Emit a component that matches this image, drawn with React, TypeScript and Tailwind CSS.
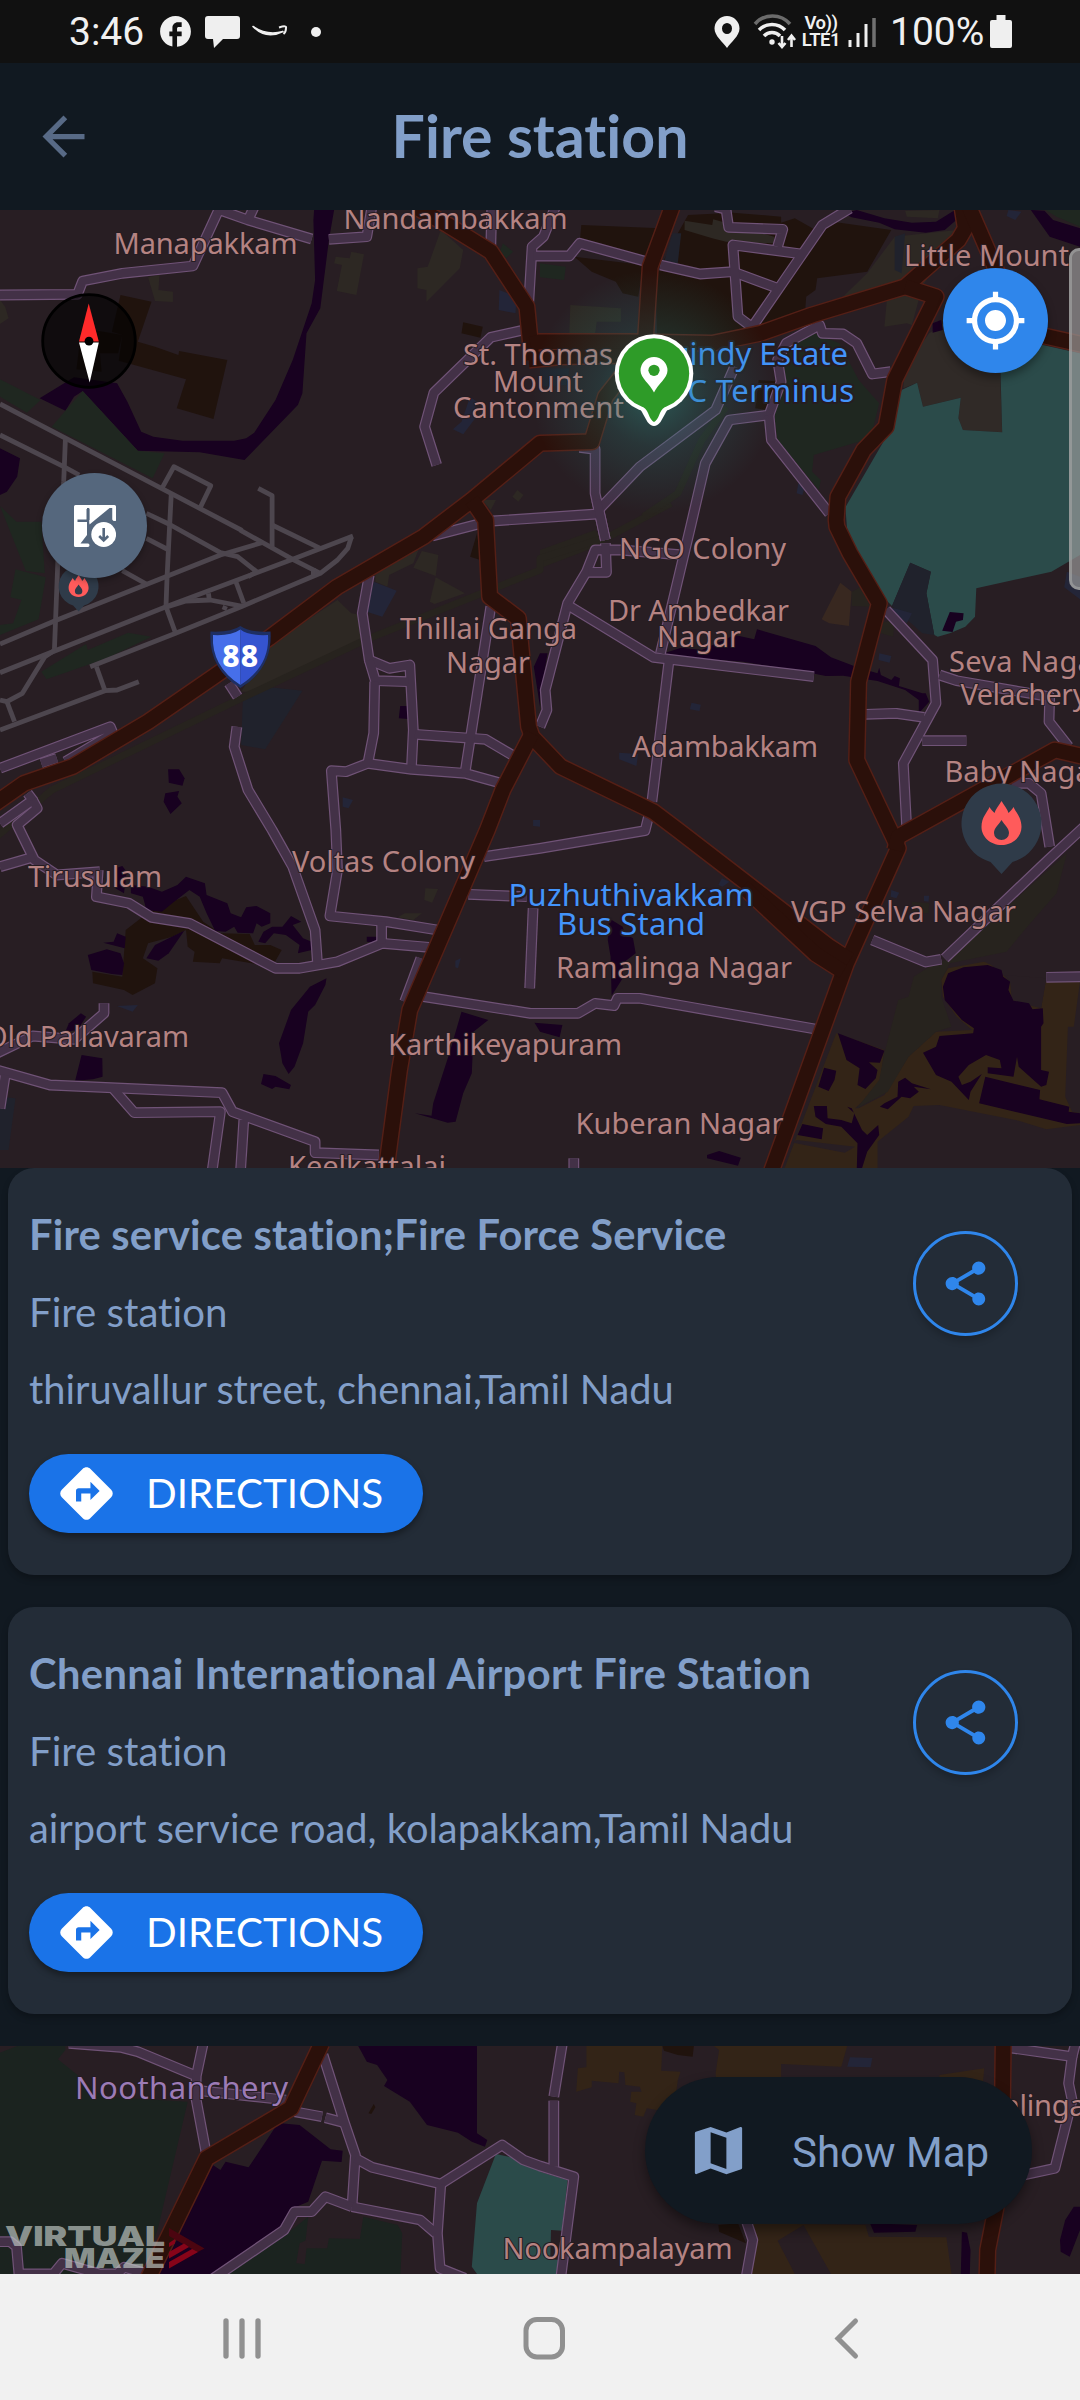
import type { ReactNode } from 'react';
import { MdArrowBack, MdMap, MdMyLocation, MdShare, MdDirections, MdFacebook } from 'react-icons/md';

/* ---------- Map geometry ---------- */

// Each map sheet has its own origin; a sheet is 1568 units wide for 540 px, and 3 units per px high.
const SHEETS: Record<string, [number, number]> = {
  A: [0, 200],
  B: [540, 200],
  C: [0, 500],
  D: [540, 500],
  E: [0, 830],
  F: [540, 830],
  G: [0, 2030],
  H: [540, 2030],
};

// "A 0 10 20 30 B 5 5" -> polyline points in page pixels
function pts(src: string): string {
  const out: string[] = [];
  let o = SHEETS.A;
  let u: number | null = null;
  for (const t of src.split(' ')) {
    if (SHEETS[t]) o = SHEETS[t];
    else if (u === null) u = Number(t);
    else {
      out.push((o[0] + (u * 540) / 1568).toFixed(1) + ',' + (o[1] + Number(t) / 3).toFixed(1));
      u = null;
    }
  }
  return out.join(' ');
}

const AREAS: [string, string[]][] = [
  ['#20130d', [
    'A 350 285 440 305 400 425 450 440 518 465 520 453 660 480 620 657 513 625 540 538 345 482 355 405 325 395',
    'A 270 390 355 405 343 460 290 460 295 515 222 508 235 400',
    'A 1345 367 1402 380 1395 413 1340 400',
    'B 120 75 350 85 325 180 300 175 115 135',
    'B 400 100 430 45 560 38 700 50 700 68 740 55 800 90 830 62 1020 90 950 215 805 235 800 270 773 290 770 330 620 385 540 430 340 410 335 230',
    'B 100 170 300 195 285 290 240 280 220 245 150 215',
    'B 635 540 700 545 660 630 625 625',
    'C 1385 100 1395 180 1365 170',
    'E 540 198 590 275 640 310 725 312 740 345 785 345 818 360 790 410 645 385 638 400 560 395 565 365 545 350 540 300 500 320 430 340 415 385 457 415 450 460 385 495 360 480 270 460 268 425 355 440 365 300 440 240',
    'G 1085 222 1090 232 1078 252 1070 250',
    'H 518 585 575 580 598 640 520 605',
    'H 355 48 447 48 443 80 400 75 360 62',
  ]],
  ['#2d2823', [
    'A 430 232 463 225 460 270 502 275 502 306 450 303',
    'A 975 170 1015 175 1020 155 1057 163 1035 285 978 273 993 195 970 190',
    'A 1280 90 1345 150 1335 205 1238 305 1238 270 1212 265 1212 205 1242 200',
    'A 0 300 15 320 25 355 0 372',
    'B 420 62 500 75 503 58 680 110 680 130 540 125 500 115 420 90',
    'B 88 315 235 325 235 365 165 365 160 400 85 400',
    'B 1030 110 1210 90 1110 260 1080 375 1065 370 1000 380 1010 270 870 300 950 220',
    'B 1060 32 1160 30 1155 55 1065 50',
    'C 980 300 1020 340 1050 345 1065 420 740 575 700 575 790 430',
    'C 1200 203 1225 153 1273 165 1265 228',
    'C 1265 232 1350 280 1262 312 1248 305',
    'C 1090 225 1130 190 1215 150 1200 190 1130 225 1125 260 1090 245',
    'E 1235 175 1272 177 1255 218 1232 210',
    'E 1175 250 1225 250 1200 270 1155 262',
    'A 1400 900 1440 900 1425 930',
    'A 1502 870 1520 885 1505 905 1488 890',
  ]],
  ['#302a27', [
    'B 1160 380 1210 330 1330 445 1335 500 1342 697 1228 690 1215 655 1222 593 1112 620 1095 548 1055 565 1060 500 1130 400',
  ]],
  ['#180120', [
    'A 912 30 970 30 955 120 930 325 890 400 878 580 865 615 710 780 580 757 400 752 240 573 215 590 190 632 115 595 215 532 340 550 370 605 410 695 445 710 530 722 680 722 715 715 738 698 800 600 850 480 905 310 915 240 910 60',
    'A 0 745 58 775 50 830 20 875 0 885',
    'B 880 40 920 30 1000 55 1080 68 1150 65 1205 30 1215 55 1175 90 1120 98 1030 88 985 68 905 52',
    'B 1425 30 1465 32 1490 60 1568 85 1568 140 1480 110',
    'B 1140 370 1165 360 1170 390 1140 398',
    'D 360 460 410 443 470 450 565 405 622 418 630 388 800 438 845 472 925 503 980 520 985 503 990 525 1020 540 1030 528 1045 535 1042 558 1110 580 1120 580 1130 605 1100 640 1100 600 1060 570 980 543 880 527 830 528 790 520 590 485 460 475',
    'D 0 460 22 460 5 560 0 565 C 1568 620 1550 500 1568 460',
    'C 488 808 520 808 536 835 530 857 490 848',
    'C 480 880 520 873 515 890 528 910 495 942 475 905',
    'C 1162 618 1185 618 1185 657 1158 655',
    'E 335 115 355 108 368 125 360 190 335 175',
    'E 380 165 430 170 470 185 515 165 540 140 595 160 600 195 660 220 670 250 700 262 715 232 745 228 785 250 785 280 760 290 745 280 735 310 690 308 680 290 655 305 625 303 600 250 580 200 550 180 500 220 470 245 425 240 415 200 380 190',
    'E 300 338 330 335 340 310 365 320 362 355',
    'E 255 375 310 358 350 370 360 400 355 435 325 432 265 420',
    'E 535 302 490 370 460 392 425 385 450 345',
    'E 750 335 765 305 790 290 820 290 845 258 875 275 850 285 880 325 905 335 905 360 865 370 870 345 830 315 795 310 770 340',
    'E 1065 320 1095 320 1095 338 1065 335',
    'E 948 445 945 465 915 525 895 545 880 640 855 710 838 732 820 700 810 640 845 540 900 470',
    'E 765 732 800 738 845 765 840 778 800 770 790 777 758 762',
    'E 190 605 200 580 235 550 250 560 225 600',
    'E 237 675 297 685 298 740 270 748 218 752',
    'E 1340 545 1418 570 1375 605 1370 730 1345 790 1323 875 1300 878 1205 850 1253 857 1258 820 1305 670',
    'E 1552 578 F 65 585 57 622 0 605',
    'F 200 265 240 290 245 310 270 325 278 370 240 400 240 445 208 497 205 380 197 330',
    'F 520 963 583 983 575 1007 485 985 485 975',
    'G 1040 48 1385 48 1385 310 1415 330 1408 350 1370 335 1330 308 1240 285 1190 215 1115 168 1125 150 1095 105 1065 95',
    'G 815 280 870 285 960 358 995 362 992 396 935 392 895 515 860 530 820 605 625 732 440 732 500 620 610 400 640 420 655 395 722 412 800 290',
    'H 958 580 1095 585 1090 605 970 608',
    'H 1225 605 1240 608 1250 660 1248 732 1222 732',
    'H 1550 530 1568 530 1568 600 1538 680 1512 665 1510 630 1525 570',
  ]],
  ['#1f2720', [
    'A 0 538 118 600 78 638 0 590',
    'A 240 573 400 752 478 760 443 835 150 680 190 632',
    'C 0 18 48 65 120 65 130 220 75 213',
    'C 45 208 133 232 112 358 0 405 0 375 38 370 62 300 30 292',
    'C 120 515 250 432 255 450 372 398 440 410 310 475 135 538',
    'B 795 400 870 430 925 540 985 610 960 715 795 765 790 815 815 840 810 870 690 720 680 640 700 560 690 500 710 440',
    'B 1468 30 1568 30 1568 80 1500 50',
    'A 1460 130 1490 155 1470 175 1450 160',
    'B 0 190 75 200 70 240 0 232',
  ]],
  ['#1b231f', [
    'G 0 68 50 48 190 48 190 60 168 88 225 135 300 200 545 215 460 590 415 732 0 732',
    'G 895 560 885 655 950 655 955 625 1045 627 1055 560 1155 585 1168 610 1163 732 650 732 840 605',
  ]],
  ['#281e23', ['G 890 630 870 640 860 700 885 702 890 655']],
  ['#2b4b4a', [
    'B 1335 445 1460 435 1568 460 D 1568 165 1485 215 1267 265 1263 350 1235 380 1190 400 1155 410 1145 405 1122 280 1135 215 1075 188 1022 318 1005 300 895 130 885 0 B 885 925 1000 720 1050 570 1095 548 1112 620 1222 593 1215 655 1228 690 1342 697',
    'G 1440 372 1500 385 1568 410 H 0 425 80 450 50 732 G 1385 732 1370 710 1385 520',
  ]],
  ['#281e23', ['H 32 600 65 602 60 690 30 688']],
  ['#20222c', [
    'D 1075 188 1135 215 1122 280 1145 405 1110 400 1022 318',
    'C 705 600 770 560 878 572 770 748 700 735',
    'E 0 800 45 805 25 960 0 960',
    'B 0 505 85 505 80 555 0 560',
    'B 385 100 410 100 400 190 360 185',
    'B 1030 110 1060 100 1050 220 1030 210',
  ]],
  ['#232538', [
    'C 1085 245 1152 272 1110 350 1065 335',
    'D 1005 318 1080 340 1065 370',
    'D 985 460 1020 468 1015 488 983 480',
    'D 440 608 467 614 463 633 435 628',
    'D 230 758 285 762 280 798 230 778',
    'C 995 892 1025 900 1012 925 995 920',
    'C 1548 960 1568 960 1568 980 1548 978',
    'E 1322 392 1338 385 1330 415 1322 412',
    'E 340 528 400 525 385 545',
    'A 1450 270 1500 290 1497 340 1448 330',
    'A 1340 665 1365 590 1385 605 1375 640 1380 655 1345 703 1315 688',
    'F 528 145 550 155 530 170 518 165',
    'F 1020 180 1043 188 1035 205 1018 200',
    'F 1115 197 1130 197 1128 215 1115 213',
    'H 900 82 965 84 960 112 892 110',
    'B 1360 30 1398 35 1380 60 1355 48',
    'B 750 850 770 855 762 885 745 880',
    'D 1530 215 1568 230 1568 298 1522 262',
  ]],
  ['#180120', ['D 1190 336 1230 340 1228 360 1208 365 1198 396 1168 392']],
  ['#382820', ['D 872 248 905 275 897 378 840 370 818 358']],
  ['#332417', [
    'F 860 610 1000 660 985 770 915 835 925 835 1000 795 1070 680 1150 605 1255 600 1210 560 1170 500 1165 450 1185 415 1290 395 1310 405 1350 440 1420 520 1455 535 1468 455 1568 455 1550 590 1533 590 1525 800 1545 845 1568 850 1568 885 1470 898 1390 872 1160 825 1085 828 1070 860 980 935 980 1015 710 1015',
    'H 135 48 355 48 352 122 408 125 400 150 390 230 340 240 310 235 300 260 275 255 280 220 262 215 265 185 295 185 290 170 248 165 245 127 230 125 228 160 150 152 150 172 105 185 110 115 135 112',
    'H 505 48 892 48 875 110 700 102 700 200 515 200 510 130 520 60',
    'H 1160 135 1290 115 1285 170 1160 170',
    'H 610 580 945 585 955 620 1180 622 1195 732 845 732 765 585 690 632 740 732 600 732',
  ]],
  ['#281e23', ['F 745 930 915 950 885 968 735 938', 'F 1350 435 1470 445 1455 535 1418 525 1370 510 1365 455']],
  ['#180120', [
    'F 1185 430 1230 412 1300 405 1340 420 1345 440 1365 455 1360 480 1375 512 1420 520 1430 538 1460 535 1462 580 1455 590 1455 720 1478 725 1470 765 1455 770 1390 710 1385 680 1375 740 1300 730 1300 712 1340 715 1335 690 1295 675 1245 705 1215 740 1225 765 1250 755 1283 732 1250 785 1245 810 1195 755 1150 735 1112 668 1150 650 1160 618 1258 610 1260 595 1225 570 1175 510 1170 470',
    'F 1293 740 1452 780 1450 808 1537 830 1535 845 1568 850 1568 880 1530 882 1275 820',
    'F 865 610 1000 662 987 698 955 697 980 720 975 745 945 777 922 765 928 715 890 690',
    'F 825 713 860 722 855 750 838 783 808 770',
    'F 762 882 822 895 818 928 748 915',
    'F 795 828 833 828 835 865 875 870 905 880 913 850 892 830 905 835 935 900 950 915 982 885 985 915 950 965 935 1015 920 1015 922 940 875 890 830 882 800 860',
    'F 1040 755 1060 743 1080 760 1135 778 1085 770 1100 785 1075 805 1050 800 1010 838 987 830 1000 820 1038 800',
  ]],
  ['#27231e', [
    'F 1530 70 1500 190 1415 290 1355 365 1190 400 1165 450 1165 500 1195 590 1150 605 1070 680 1010 785 920 835 985 750 1000 670 1040 510 1070 500 1085 440 1130 410 1190 385',
    'F 1080 215 1130 220 1128 250 1080 250',
    'D 985 370 1030 360 1025 410 990 400',
    'D 905 275 930 262 960 320 905 318',
    'D 0 150 160 90 190 130 0 205',
  ]],
];

const TAXIWAYS = [
  'A 0 612 700 990 C 700 92 850 178 930 220',
  'A 0 705 185 800 230 825',
  'A 190 718 185 845 C 168 180 158 450',
  'A 470 865 505 800 612 857 582 922',
  'A 497 885 492 990 C 485 235 482 320 510 400',
  'A 750 865 790 887 C 790 0 790 140',
  'C 425 40 490 72 640 158 690 170 745 215 720 230',
  'C 425 115 490 150',
  'C 790 75 930 145',
  'C 0 432 160 362 640 165 760 128',
  'C 0 518 482 320 850 178 1025 108',
  'C 0 690 305 572 340 570 403 545',
  'C 262 500 510 400 700 320 930 220 980 180 1010 145 1020 112',
  'C 160 450 130 470 65 580 20 605 0 600',
  'C 20 605 42 665',
  'C 280 500 305 572',
  'C 355 212 430 255',
  'C 685 245 708 310',
  'C 482 322 540 303 610 300 700 318',
  'C 605 280 608 300',
  'C 655 318 650 330',
  'C 910 205 910 230',
];

const MINOR = [
  'A 0 285 225 283 240 243 355 220 560 198 635 30 640 20',
  'A 625 25 720 60 905 117',
  'A 720 60 738 20',
  'A 955 118 1065 110 1080 20',
  'A 1428 20 1425 140',
  'A 1535 315 1545 140 B 10 110 45 20',
  'A 1550 168 B 85 168 115 130 310 185',
  'B 350 195 465 222 560 215 690 265',
  'B 510 20 540 28 548 82 705 88 690 140',
  'B 760 162 560 135 575 350 620 385',
  'B 900 25 820 75 750 180 610 390',
  'A 1520 390 1425 412 1260 578 1233 680 1268 795',
  'B 1018 515 965 522 920 430 880 402 820 400 812 375 715 430 690 480 700 545 665 645 550 660 480 790 435 990 D 350 460',
  'B 665 645 672 720 840 940',
  'B 565 500 510 630 290 800 165 935',
  'B 115 742 160 748 160 880 190 1020',
  'A 1430 963 B 165 942',
  'C 1255 108 1390 72',
  'D 165 0 190 120',
  'D 415 165 235 150 160 150 135 215 80 310 15 570 20 630 0 680',
  'D 190 130 193 217 140 217',
  'D 80 315 330 472 795 530',
  'D 375 480 325 905',
  'D 315 950 305 992 F 0 55 E 1405 80',
  'D 1005 330 1140 480 1150 610 1055 790 1065 990',
  'D 945 643 1035 640 1115 652',
  'D 1110 722 1238 722',
  'D 1160 525 1210 542 1480 590 1478 665 1535 740',
  'D 1370 850 1420 850 1455 880 F 1480 50',
  'F 1580 -10 1475 90 1175 385',
  'F 1165 388 1120 396 965 330',
  'E 1230 500 1540 550 F 110 550 160 520 215 527 225 505 290 505 430 530 815 600',
  'F 1470 442 1580 440',
  'F 98 985 98 1020',
  'C 0 805 320 680 328 700 190 785',
  'C 120 790 165 775',
  'C 0 970 95 900 80 880',
  'C 95 900 108 925 50 975 E 100 90 165 135 290 125',
  'E 0 110 100 80',
  'E 285 120 280 200 375 220 440 262 550 280 800 415 870 415 980 395 1110 340 1245 352',
  'C 665 550 690 590',
  'C 688 680 680 740 720 870 E 790 0 850 110 915 300 922 400',
  'C 1072 225 1052 340 1072 480 1130 505 1190 495 1200 690 1195 800',
  'C 1072 480 1090 542 1185 545',
  'C 1088 545 1085 700 1068 790',
  'E 1270 300 1120 275 958 258 980 120 975 0 C 962 812 1005 815 1068 790 1195 808 1350 820 1455 850',
  'C 1205 703 1410 718 1495 770',
  'C 1350 820 1425 320',
  'E 1108 275 1108 340',
  'E 1360 193 1530 200',
  'E 1548 235 1538 475',
  'E 1222 385 1175 515',
  'E -10 720 145 765 645 788 675 845 915 935 915 968 1100 975',
  'E 325 772 390 848 640 845 615 1030',
  'E 708 870 698 1030',
  'E 0 835 15 735',
  'E 302 520 302 550 215 628 95 618 -10 670',
  'G 200 40 350 52 400 65 570 138',
  'G 590 40 570 138 568 200 598 365',
  'G 580 182 830 210',
  'G 855 245 935 260',
  'G 945 263 1000 278',
  'G 938 75 1000 278 1032 375 1022 530',
  'G 1032 385 1080 412 1280 462 1458 345 1520 390 H 0 408 98 440 60 745',
  'G 1280 462 1270 610 1278 715 1350 745',
  'G 1022 530 1220 570 1265 610',
  'G 1022 530 945 500 905 545 855 545 825 600 620 745',
  'G -10 635 30 635 48 650 55 732 155 732 180 700 290 732 340 732 360 712 430 732',
  'H 65 40 40 200',
  'H 40 212 40 410',
  'H 600 575 618 630 598 745',
  'H 1355 52 1545 80 1535 160 1545 210 1495 415 1405 435',
  'H 1545 80 1555 40',
];

const MAJOR = [
  'A 1205 20 1300 75 1425 155 1530 320 1545 480',
  'A 1540 432 B 0 425 260 425 500 430 640 400 790 345 1060 260 1215 120 1235 85 1225 20',
  'A 1535 480 B 60 470 290 465',
  'B 1245 20 1325 210 1430 400 1580 435',
  'B 384 20 320 200 305 440 190 590 150 725 0 730 A 1568 730 1370 900 C 1230 110 980 260 780 415 620 530 430 665 210 800 70 850 -20 915',
  'B 1060 260 1150 290 1030 540 1005 680 940 750 865 890 860 960 D 862 80 900 160 985 310 925 545 920 780 1030 1020 F 1040 55 890 400 670 1030',
  'C 1370 0 1410 60 1422 290 1505 355 1535 680 1545 710 D 60 800 330 935 F 400 0 840 350 900 390',
  'C 1545 700 1460 870 E 1415 0 1190 540 1160 720 1120 1030',
  'D 1580 770 1495 750 F 1040 20 1030 60',
  'F 590 170 800 372 880 425',
  'G 934 40 845 235 600 385 430 745',
  'H 1345 40 1340 450 1300 660 1298 745',
];

const RAIL = [
  'C -10 1010 150 870 690 600 1060 420 1568 210 D 0 175 200 110 380 10',
  'D 300 50 B 400 880 470 720 540 620',
];

type Label = [string, number, number, number, ('blue' | 'violet')?];

const LABELS: Label[] = [
  ['Manapakkam', 113.5, 253.5, 184],
  ['Nandambakkam', 343.5, 228.5, 224],
  ['St. Thomas', 463, 365, 150],
  ['Mount', 493, 392, 90],
  ['Cantonment', 453, 418, 171],
  ['Little Mount', 904, 266, 165],
  ['Guindy Estate', 648, 364.5, 200, 'blue'],
  ['MTC Terminus', 642, 401.5, 212, 'blue'],
  ['NGO Colony', 619, 559, 167],
  ['Dr Ambedkar', 608, 620.5, 181],
  ['Nagar', 657, 647, 84],
  ['Thillai Ganga', 400, 639, 177],
  ['Nagar', 446, 673, 84],
  ['Seva Nagar', 949, 672, 157],
  ['Velachery', 960.5, 705, 127],
  ['Baby Nagar', 944.5, 782, 159],
  ['Adambakkam', 632, 757, 186],
  ['Voltas Colony', 292, 872, 183],
  ['Tirusulam', 28, 886.5, 134],
  ['Old Pallavaram', -15, 1047, 204],
  ['Karthikeyapuram', 388, 1055, 234],
  ['Keelkattalai', 288, 1177, 158],
  ['Puzhuthivakkam', 508.5, 905.5, 245, 'blue'],
  ['Bus Stand', 557, 935, 148, 'blue'],
  ['Ramalinga Nagar', 556, 978, 236],
  ['VGP Selva Nagar', 791, 922, 225],
  ['Kuberan Nagar', 575.5, 1133.5, 208],
  ['Noothanchery', 75, 2098.5, 213, 'violet'],
  ['Nookampalayam', 502.5, 2258.5, 230],
  ['alinga', 1003.5, 2116, 82],
];

function MapLabel({ label: [text, x, y, w, tone] }: { label: Label }) {
  const fill = tone === 'blue' ? '#4394fb' : tone === 'violet' ? '#9c7bb6' : '#b58382';
  return (
    <text
      x={x}
      y={y}
      textLength={w}
      fill={fill}
      stroke="#251c22"
      strokeWidth={tone === 'blue' ? 4 : 2}
      strokeLinejoin="round"
      paintOrder="stroke"
      fontSize={tone ? 31 : 29}
      className="font-['Noto_Sans',sans-serif]"
    >
      {text}
    </text>
  );
}

function Lines({ items, color, width }: { items: string[]; color: string; width: number }) {
  return (
    <g fill="none" stroke={color} strokeWidth={width} strokeLinejoin="round">
      {items.map((p, i) => (
        <polyline key={i} points={pts(p)} />
      ))}
    </g>
  );
}

function MapView({ top, height, className, children }: { top: number; height: number; className: string; children?: ReactNode }) {
  const within = (p: string) => (top > 2000 ? /^[GH]/.test(p) : /^[A-F]/.test(p));
  return (
    <svg className={className} viewBox={`0 ${top} 1080 ${height}`} width={1080} height={height}>
      <rect x={0} y={top} width={1080} height={height} fill="#281e23" />
      {AREAS.map(([fill, shapes], i) => (
        <g key={i} fill={fill}>
          {shapes.filter(within).map((p, j) => (
            <polygon key={j} points={pts(p)} />
          ))}
        </g>
      ))}
      <Lines items={RAIL.filter(within)} color="#27231e" width={7} />
      <Lines items={TAXIWAYS.filter(within)} color="#4d464e" width={4.8} />
      <Lines items={MINOR.filter(within)} color="#705377" width={10.8} />
      <Lines items={MINOR.filter(within)} color="#433147" width={8.4} />
      <Lines items={MAJOR.filter(within)} color="#541f16" width={17.5} />
      <Lines items={MAJOR.filter(within)} color="#2b100a" width={14.6} />
      {LABELS.filter((l) => (top > 2000 ? l[2] > 2000 : l[2] < 2000)).map((l, i) => (
        <MapLabel key={i} label={l} />
      ))}
      {children}
    </svg>
  );
}

/* ---------- Map symbols ---------- */

function FirePin({ x, y, s }: { x: number; y: number; s: number }) {
  return (
    <g transform={`translate(${x} ${y}) scale(${s})`}>
      <path d="M0 52 L-11 40 A40 40 0 1 1 11 40 Z" fill="#2f3b49" />
      <path
        d="M0 -21 C3 -16 6 -13 7 -9 C9 -11 11 -13 12 -15 C14 -10 20 -5 20 5 C20 15 11 23 0 23 C-11 23 -20 15 -20 5 C-20 -5 -14 -10 -12 -15 C-11 -13 -9 -11 -7 -9 C-6 -13 -3 -16 0 -21 Z"
        fill="#ff5b5b"
      />
      <path d="M0 -2 C3 3 7.5 6 7.5 11 A7.5 7 0 0 1 -7.5 11 C-7.5 6 -3 3 0 -2 Z" fill="#2f3b49" />
    </g>
  );
}

function MapSymbols() {
  return (
    <>
      <defs>
        <radialGradient id="glow">
          <stop offset="0" stopColor="#2f9a8c" stopOpacity="0.5" />
          <stop offset="0.45" stopColor="#2a7a74" stopOpacity="0.25" />
          <stop offset="1" stopColor="#2a7a74" stopOpacity="0" />
        </radialGradient>
      </defs>
      <circle cx="654" cy="392" r="122" fill="url(#glow)" />
      <path d="M638 405 L647.5 422 Q654 430 660.5 422 L670 405 Z" fill="#fff" />
      <circle cx="654" cy="373.5" r="39.3" fill="#fff" />
      <circle cx="654" cy="373.5" r="35.2" fill="#2e9b28" />
      <path d="M641 406 Q646 408 648 413 Q651 421 654 422 Q657 421 660 413 Q662 408 667 406 Z" fill="#2e9b28" />
      <path d="M654 392.5 C650 384 640.5 378 640.5 370.5 A13.5 13.5 0 0 1 667.5 370.5 C667.5 378 658 384 654 392.5 Z" fill="#fff" />
      <circle cx="654" cy="370.3" r="5.6" fill="#2e9b28" />

      <FirePin x={1001.5} y={822} s={1} />
      <FirePin x={78.6} y={585.5} s={0.5} />

      <path
        d="M240.4 626 Q249 632.5 270.5 631.5 Q273 668 240.4 688 Q208 668 210.5 631.5 Q231 632.5 240.4 626 Z"
        fill="#1e2f63"
      />
      <path d="M240.4 629.5 Q231 636 213 635 Q211 666 240.4 685 Z" fill="#466fea" />
      <path d="M240.4 629.5 Q249 636 268 635 Q270 666 240.4 685 Z" fill="#3554d0" />
      <text x="240.2" y="667" textAnchor="middle" fontSize="30" textLength="36" fontWeight="800" fill="#fff" className="font-['Noto_Sans',sans-serif]">
        88
      </text>
    </>
  );
}

function Compass() {
  return (
    <svg width="96" height="96" viewBox="0 0 96 96">
      <circle cx="48" cy="48" r="46.3" fill="#000" fillOpacity="0.6" stroke="#000" strokeWidth="2.8" />
      <path d="M47.7 10.5 L57.8 48.5 H38 Z" fill="#ff2a2a" />
      <path d="M38 49.5 H57.8 L48.7 89.5 Z" fill="#fff" />
      <circle cx="48" cy="48.2" r="4.4" fill="#000" />
    </svg>
  );
}

function OfflineMapIcon() {
  return (
    <svg width="42" height="42" viewBox="0 0 42 42">
      <path d="M1.5 0 H12 V3 H15.5 V18.500 L34.500 3 H38.500 V14.500 L42 16 V1.5 Q42 0 40.500 0 Z" fill="#fff" />
      <path d="M0 1.5 Q0 0 1.5 0 H13 V14.500 H3.500 V17 H13 V30 L6.500 38.500 H14 Q15.500 38.500 15.500 40.200 Q15.500 42 14 42 H1.5 Q0 42 0 40.500 Z" fill="#fff" />
      <path d="M15.500 1 H38 L15.500 19.500 Z" fill="#fff" />
      <path d="M12.500 4 H15.500 V15 H12.500 Z" fill="#55677d" />
      <circle cx="29.7" cy="29.5" r="14" fill="#55677d" />
      <path d="M38.5 3 H42 V14.5 Q42 16 40.500 16 Q38.500 16 38.500 14.500 Z" fill="#fff" />
      <circle cx="29.7" cy="29.5" r="12.4" fill="#fff" />
      <path d="M29.7 23 V35 M25.2 31 L29.7 35.5 L34.2 31" fill="none" stroke="#55677d" strokeWidth="2.6" />
    </svg>
  );
}

/* ---------- System bars ---------- */

function StatusBar() {
  return (
    <div className="flex h-[63px] items-center bg-[#111111] pt-px pr-[68px] pl-[69px] font-[Roboto,sans-serif] text-[39px] leading-none text-[#f0f0f0]">
      <span className="w-[88px]">3:46</span>
      <MdFacebook size={37} className="-mt-0.5" />
      <svg className="ml-[11px]" width="36" height="34" viewBox="0 0 36 34">
        <path d="M3 1 H32 Q35 1 35 4 V21 Q35 24 32 24 H18 L9 33 L8 24 H3 Q0 24 0 21 V4 Q0 1 3 1 Z" fill="#efefef" />
      </svg>
      <svg className="ml-[11px]" width="36" height="14" viewBox="0 0 36 14">
        <path d="M1 1.5 Q14 15 31 6.500 Q15 11 1 1.500 Z" fill="#efefef" stroke="#efefef" strokeWidth="1.6" strokeLinejoin="round" />
        <path d="M27 2.500 Q35 0 34 3 Q34 7 31.500 9" fill="none" stroke="#efefef" strokeWidth="2" />
      </svg>
      <span className="ml-[23px] size-2.5 rounded-full bg-[#f0f0f0]" />
      <div className="ml-auto flex items-center">
        <svg width="26" height="32" viewBox="0 0 26 32">
          <path fillRule="evenodd" d="M13 0 A12.500 12.500 0 0 1 25.500 12.500 C25.500 20 17 26 13 32 C9 26 0.500 20 0.500 12.500 A12.500 12.500 0 0 1 13 0 Z M13 7 A5 5.500 0 1 0 13 18 A5 5.500 0 1 0 13 7 Z" fill="#efefef" />
        </svg>
        <svg className="ml-[13px]" width="44" height="36" viewBox="0 0 44 36">
          <path d="M2 10 A23 23 0 0 1 37 10" fill="none" stroke="#6b6b6b" strokeWidth="3.5" />
          <path d="M6 16 A18 18 0 0 1 32 16 M11 22 A11 11 0 0 1 27 22" fill="none" stroke="#efefef" strokeWidth="3.5" />
          <circle cx="19" cy="28" r="2.7" fill="#efefef" />
          <path d="M29 22 V32 M25.500 29 L29 33 L32.500 29 M38.500 33 V22 M35 26 L38.500 21.500 L42 26" fill="none" stroke="#efefef" strokeWidth="2.6" />
        </svg>
        <div className="ml-[3px] flex w-[42px] flex-col items-center text-[18.5px] leading-[17px] font-semibold tracking-tight">
          <span>Vo))</span>
          <span>LTE1</span>
        </div>
        <svg className="ml-1.5" width="30" height="32" viewBox="0 0 30 32">
          <path d="M2 24 V31 M10 17 V31 M18 8 V31" stroke="#efefef" strokeWidth="3" />
          <path d="M26 2 V31" stroke="#707070" strokeWidth="3.5" />
        </svg>
        <span className="ml-3 w-[94px]">100%</span>
        <svg className="ml-1.5" width="22" height="34" viewBox="0 0 22 34">
          <path d="M6.500 0 H15.500 V5 H20 Q22 5 22 7 V31 Q22 33 20 33 H2 Q0 33 0 31 V7 Q0 5 2 5 H6.500 Z" fill="#efefef" />
        </svg>
      </div>
    </div>
  );
}

function NavBar() {
  return (
    <div className="flex h-[126px] items-center bg-[#f1f1f1] pt-px pl-[222px]">
      <svg width="40" height="44" viewBox="0 0 40 44" fill="none" stroke="#909090" strokeWidth="5.3" strokeLinecap="round">
        <path d="M4 5 V40 M20 5 V40 M36 5 V40" />
      </svg>
      <svg className="ml-[260px]" width="44" height="44" viewBox="0 0 44 44" fill="none" stroke="#909090" strokeWidth="5">
        <rect x="4" y="3.5" width="36.5" height="37.5" rx="11" />
      </svg>
      <svg className="ml-[265px]" width="32" height="44" viewBox="0 0 32 44" fill="none" stroke="#909090" strokeWidth="5" strokeLinecap="round">
        <path d="M24.500 5 L7 22.500 L24.500 40" />
      </svg>
    </div>
  );
}

/* ---------- Station list ---------- */

function StationCard({ name, address, tracking }: { name: string; address: string; tracking: string }) {
  return (
    <article className="flex h-[407px] justify-between rounded-[26px] bg-[#232c37] pr-[54px] pl-[21px] text-[#829fc9] shadow-[0_4px_6px_rgba(0,0,0,0.25)]">
      <div className="flex flex-col items-start whitespace-nowrap">
        <h2 className={`mt-[41px] text-[41.6px] leading-[50px] font-bold ${tracking}`}>{name}</h2>
        <p className="mt-7 text-[40.2px] leading-[50px]">Fire station</p>
        <p className="mt-[27px] text-[39.8px] leading-[50px]">{address}</p>
        <button className="mt-10 flex h-[79px] w-[394px] items-center rounded-full bg-[#1a73e8] pl-[26px] text-[40.4px] leading-[50px] text-white shadow-[0_4px_6px_rgba(0,0,0,0.35)]">
          <MdDirections size={63} />
          <span className="-mt-0.5 ml-[28px]">DIRECTIONS</span>
        </button>
      </div>
      <button className="mt-[63px] flex size-[105px] items-center justify-center rounded-full border-3 border-[#2f86eb] bg-[#232c37] text-[#2f86eb] shadow-[0_5px_7px_rgba(0,0,0,0.2)]">
        <MdShare size={53} />
      </button>
    </article>
  );
}

export default function App() {
  return (
    <div className="flex h-[2400px] w-[1080px] flex-col overflow-hidden bg-[#111921] font-[Lato,sans-serif] [font-variant-ligatures:none]">
      <StatusBar />

      <header className="relative flex h-[147px] items-center justify-center">
        <MdArrowBack size={63} className="absolute left-8 text-[#586a86]" />
        <h1 className="-mt-0.5 text-[59px] leading-none font-bold text-[#829fc9]">Fire station</h1>
      </header>

      <section className="relative h-[958px] overflow-hidden">
        <MapView top={210} height={958} className="block">
          <MapSymbols />
        </MapView>
        <div className="absolute top-[83px] left-[41px]">
          <Compass />
        </div>
        <button className="absolute top-[263px] left-[42px] flex size-[105px] items-center justify-center rounded-full bg-[#55677d] shadow-[0_3px_6px_rgba(0,0,0,0.3)]">
          <OfflineMapIcon />
        </button>
        <button className="absolute top-[58px] left-[943px] flex size-[105px] items-center justify-center rounded-full bg-[#2f86eb] text-white shadow-[0_5px_8px_rgba(0,0,0,0.35)]">
          <MdMyLocation size={63} />
        </button>
        <div className="absolute top-[38px] -right-5 h-[342px] w-[31px] rounded-[10px] border-[3px] border-[#a0a0a0]/70 bg-[#a0a0a0]/65" />
      </section>

      <main className="flex h-[878px] flex-col gap-8 px-2">
        <StationCard
          name="Fire service station;Fire Force Service"
          address="thiruvallur street, chennai,Tamil Nadu"
          tracking="tracking-[0.2px]"
        />
        <StationCard
          name="Chennai International Airport Fire Station"
          address="airport service road, kolapakkam,Tamil Nadu"
          tracking="tracking-[0.43px]"
        />
      </main>

      <section className="relative h-[228px] overflow-hidden">
        <MapView top={2046} height={228} className="block">
          <g fill="#c4ccc8" fillOpacity="0.68" className="font-[Inter,sans-serif]" fontWeight="900" fontSize="26.5">
            <text x="5" y="2246.3" textLength="160" lengthAdjust="spacingAndGlyphs">VIRTUAL</text>
            <text x="64" y="2268" textLength="101" lengthAdjust="spacingAndGlyphs">MAZE</text>
          </g>
          <path d="M169 2228 L204.500 2248.500 L192 2255 V2249 L169 2236 Z" fill="#4b0510" />
          <path d="M169 2243 L175 2239 V2243.500 L169 2247 Z M169 2252 L184 2243.500 L189 2247 L169 2258.500 Z M169 2262 L192 2249 L198 2252 L169 2268.500 Z" fill="#860419" />
        </MapView>
        <button className="absolute top-[31px] left-[645px] flex h-[147px] w-[387px] items-center rounded-full bg-[#111921] pl-[42px] font-[Roboto,sans-serif] text-[42px] text-[#829fc9] shadow-[0_6px_12px_rgba(0,0,0,0.4)]">
          <MdMap size={63} />
          <span className="mt-1 ml-[42px] whitespace-nowrap">Show Map</span>
        </button>
      </section>

      <NavBar />
    </div>
  );
}
